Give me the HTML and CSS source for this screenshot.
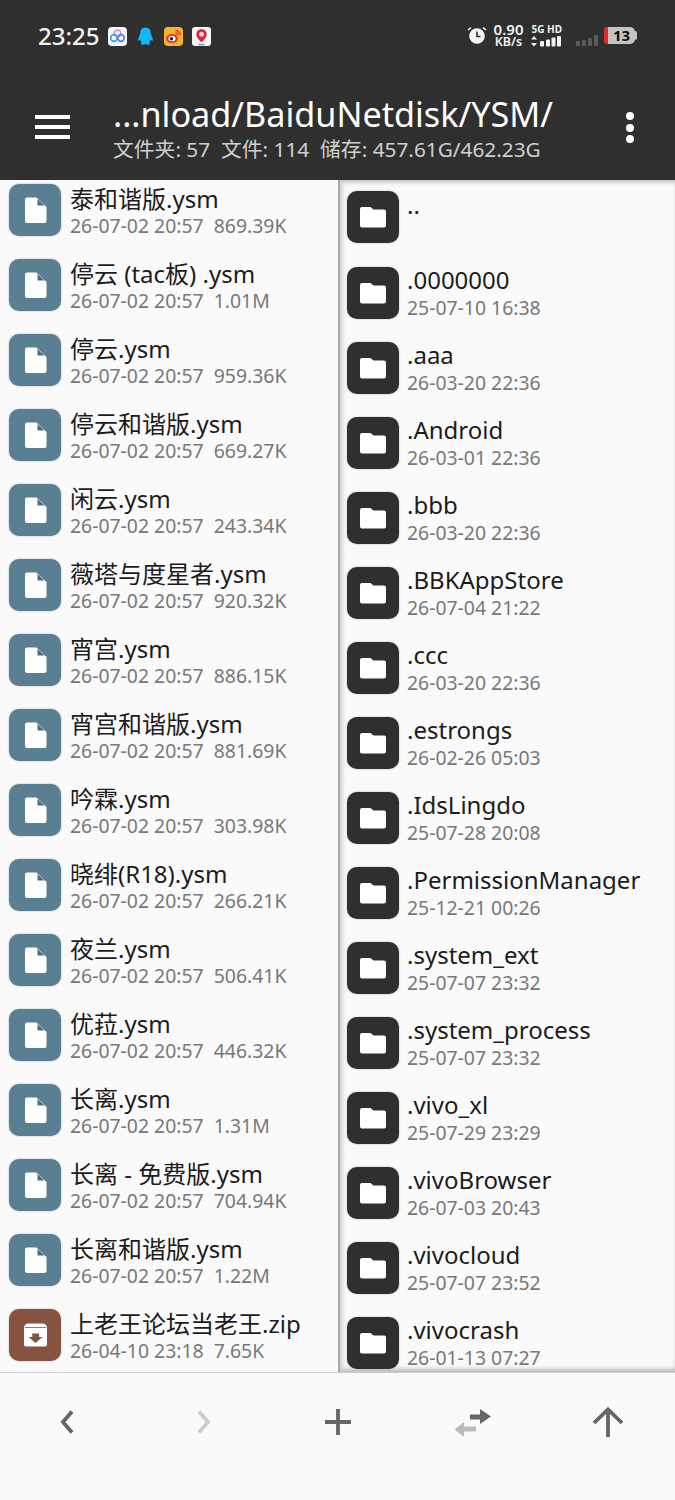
FILE: index.html
```html
<!DOCTYPE html>
<html lang="en">
<head>
<meta charset="UTF-8" />
<meta name="viewport" content="width=device-width, initial-scale=1" />
<title>File Manager</title>
<link rel="stylesheet" href="styles.css">
</head>
<body>

<svg class="defs" width="0" height="0">
  <symbol id="file" viewBox="0 0 52 52">
    <path d="M16 15.500a2 2 0 0 1 2-2h9.500l10 9.500v14a2 2 0 0 1-2 2h-17.500a2 2 0 0 1-2-2z" fill="#fff"/>
    <path d="M28.500 15v6.500h7z" fill="#4d6c7d"/>
  </symbol>
  <symbol id="folder" viewBox="0 0 52 52">
    <path d="M13 18a2 2 0 0 1 2-2h8.500l3 2.500h10.500a2 2 0 0 1 2 2v14a2 2 0 0 1-2 2h-22a2 2 0 0 1-2-2z" fill="#fff"/>
  </symbol>
  <symbol id="zip" viewBox="0 0 52 52">
    <path d="M15 19a4.500 4.500 0 0 1 4.500-4.500h14a4.500 4.500 0 0 1 4.500 4.500v16.500a2 2 0 0 1-2 2h-19a2 2 0 0 1-2-2z" fill="#fff"/>
    <path d="M16 18.500h21" stroke="#85533f" stroke-width=".8"/>
    <path d="M23 24.500h7v3.500h3.500l-7 6-7-6h4z" fill="#85533f"/>
  </symbol>
</svg>

<header class="topbar">
  <div class="status">
    <span class="clock">23:25</span>
    <div class="notif">
      <svg width="19" height="19" viewBox="0 0 19 19"><rect width="19" height="19" rx="4" fill="#f4f6fa"/><circle cx="9.500" cy="6.500" r="3.300" fill="none" stroke="#e58cc4" stroke-width="1.700"/><circle cx="6" cy="11" r="3.300" fill="none" stroke="#3aa6e0" stroke-width="1.700"/><circle cx="13" cy="11" r="3.300" fill="none" stroke="#5a7fe0" stroke-width="1.700"/></svg>
      <svg width="19" height="19" viewBox="0 0 19 19"><path d="M9.500 .5c3.800 0 5.300 2.900 5.300 5.700 0 1.800 2.400 4.600 2 7-.3 1.100-1.500.2-2-.6-.3 1.300-.8 2.200-1.500 2.800 1 .6 1.300 1.800 0 2.200-1.500.4-2.800.1-3.800-.6-1 .7-2.300 1-3.800.6-1.300-.4-1-1.600 0-2.200-.7-.6-1.200-1.500-1.500-2.800-.5.800-1.700 1.700-2 .6-.4-2.400 2-5.200 2-7C4.200 3.400 5.700.5 9.500.5z" fill="#12b7f5"/></svg>
      <svg width="19" height="19" viewBox="0 0 19 19"><rect width="19" height="19" rx="4" fill="#f5b32f"/><ellipse cx="8" cy="11.500" rx="6" ry="4.500" fill="#e6322d"/><ellipse cx="8" cy="11.500" rx="3.500" ry="2.800" fill="#fff"/><circle cx="7.500" cy="11.700" r="1.700" fill="#222"/><path d="M11.500 3.500a5 5 0 0 1 5 5M11.500 6a2.500 2.500 0 0 1 2.500 2.500" fill="none" stroke="#e6322d" stroke-width="1.300"/></svg>
      <svg width="19" height="19" viewBox="0 0 19 19"><rect width="19" height="19" rx="3" fill="#f8f8f8"/><path d="M9.500 2a5.200 5.200 0 0 1 5.200 5.200c0 3-2.700 5.300-5.200 8.300-2.500-3-5.200-5.300-5.200-8.300A5.200 5.200 0 0 1 9.500 2z" fill="#d9263a"/><circle cx="9.500" cy="7.200" r="2.500" fill="#f6c9cf"/><path d="M6.500 17.500h6" stroke="#7a8fd0" stroke-width="1.500"/></svg>
    </div>
    <div class="sys">
      <svg width="20" height="20" viewBox="0 0 20 20"><circle cx="10" cy="11" r="7.800" fill="#f4f4f4"/><path d="M10 6.500v5h3.500" fill="none" stroke="#2f2f2f" stroke-width="1.600"/><path d="M1 5l3-2.500M19 5l-3-2.500" stroke="#f4f4f4" stroke-width="1.600"/></svg>
      <div class="speed"><span class="speed-num">0.90</span><span class="speed-unit">KB/s</span></div>
      <div class="sim">
        <span class="sim-label">5G HD</span>
        <svg width="30" height="11" viewBox="0 0 30 11"><path d="M3 0l3 3.500H0zM3 10.500L0 7h6z" fill="#f4f4f4"/><rect x="9" y="5" width="4" height="5.500" rx="1" fill="#f4f4f4"/><rect x="15" y="3.500" width="4" height="7" rx="1" fill="#f4f4f4"/><rect x="20.500" y="1.500" width="4" height="9" rx="1" fill="#f4f4f4"/><rect x="26" y="0" width="4" height="10.500" rx="1" fill="#f4f4f4"/></svg>
      </div>
      <svg class="sig2" width="22" height="11" viewBox="0 0 22 11"><rect x="0" y="6" width="4" height="5" rx="1"/><rect x="6" y="5" width="4" height="6" rx="1"/><rect x="12" y="3" width="4" height="8" rx="1"/><rect x="18" y="0" width="4" height="11" rx="1"/></svg>
      <div class="battery"><i class="battery-red"></i><b>13</b><i class="battery-nub"></i></div>
    </div>
  </div>
  <div class="toolbar">
    <div class="menu"><i></i><i></i><i></i></div>
    <div class="path">
      <div class="path-name">...nload/BaiduNetdisk/YSM/</div>
      <div class="path-info">文件夹: 57&nbsp; 文件: 114&nbsp; 储存: 457.61G/462.23G</div>
    </div>
    <div class="more"><i></i><i></i><i></i></div>
  </div>
</header>

<main class="panes">
  <section class="pane pane-left">
    <div class="list">
      <div class="row"><svg class="ico ico-file"><use href="#file"/></svg><div class="txt"><div class="name">泰和谐版.ysm</div><div class="meta">26-07-02 20:57&nbsp; 869.39K</div></div></div>
      <div class="row"><svg class="ico ico-file"><use href="#file"/></svg><div class="txt"><div class="name">停云 (tac板) .ysm</div><div class="meta">26-07-02 20:57&nbsp; 1.01M</div></div></div>
      <div class="row"><svg class="ico ico-file"><use href="#file"/></svg><div class="txt"><div class="name">停云.ysm</div><div class="meta">26-07-02 20:57&nbsp; 959.36K</div></div></div>
      <div class="row"><svg class="ico ico-file"><use href="#file"/></svg><div class="txt"><div class="name">停云和谐版.ysm</div><div class="meta">26-07-02 20:57&nbsp; 669.27K</div></div></div>
      <div class="row"><svg class="ico ico-file"><use href="#file"/></svg><div class="txt"><div class="name">闲云.ysm</div><div class="meta">26-07-02 20:57&nbsp; 243.34K</div></div></div>
      <div class="row"><svg class="ico ico-file"><use href="#file"/></svg><div class="txt"><div class="name">薇塔与度星者.ysm</div><div class="meta">26-07-02 20:57&nbsp; 920.32K</div></div></div>
      <div class="row"><svg class="ico ico-file"><use href="#file"/></svg><div class="txt"><div class="name">宵宫.ysm</div><div class="meta">26-07-02 20:57&nbsp; 886.15K</div></div></div>
      <div class="row"><svg class="ico ico-file"><use href="#file"/></svg><div class="txt"><div class="name">宵宫和谐版.ysm</div><div class="meta">26-07-02 20:57&nbsp; 881.69K</div></div></div>
      <div class="row"><svg class="ico ico-file"><use href="#file"/></svg><div class="txt"><div class="name">吟霖.ysm</div><div class="meta">26-07-02 20:57&nbsp; 303.98K</div></div></div>
      <div class="row"><svg class="ico ico-file"><use href="#file"/></svg><div class="txt"><div class="name">晓绯(R18).ysm</div><div class="meta">26-07-02 20:57&nbsp; 266.21K</div></div></div>
      <div class="row"><svg class="ico ico-file"><use href="#file"/></svg><div class="txt"><div class="name">夜兰.ysm</div><div class="meta">26-07-02 20:57&nbsp; 506.41K</div></div></div>
      <div class="row"><svg class="ico ico-file"><use href="#file"/></svg><div class="txt"><div class="name">优菈.ysm</div><div class="meta">26-07-02 20:57&nbsp; 446.32K</div></div></div>
      <div class="row"><svg class="ico ico-file"><use href="#file"/></svg><div class="txt"><div class="name">长离.ysm</div><div class="meta">26-07-02 20:57&nbsp; 1.31M</div></div></div>
      <div class="row"><svg class="ico ico-file"><use href="#file"/></svg><div class="txt"><div class="name">长离 - 免费版.ysm</div><div class="meta">26-07-02 20:57&nbsp; 704.94K</div></div></div>
      <div class="row"><svg class="ico ico-file"><use href="#file"/></svg><div class="txt"><div class="name">长离和谐版.ysm</div><div class="meta">26-07-02 20:57&nbsp; 1.22M</div></div></div>
      <div class="row"><svg class="ico ico-zip"><use href="#zip"/></svg><div class="txt"><div class="name">上老王论坛当老王.zip</div><div class="meta">26-04-10 23:18&nbsp; 7.65K</div></div></div>
    </div>
  </section>
  <section class="pane pane-right">
    <div class="list">
      <div class="row row-up"><svg class="ico ico-folder"><use href="#folder"/></svg><div class="txt"><div class="name">..</div></div></div>
      <div class="row"><svg class="ico ico-folder"><use href="#folder"/></svg><div class="txt"><div class="name">.0000000</div><div class="meta">25-07-10 16:38</div></div></div>
      <div class="row"><svg class="ico ico-folder"><use href="#folder"/></svg><div class="txt"><div class="name">.aaa</div><div class="meta">26-03-20 22:36</div></div></div>
      <div class="row"><svg class="ico ico-folder"><use href="#folder"/></svg><div class="txt"><div class="name">.Android</div><div class="meta">26-03-01 22:36</div></div></div>
      <div class="row"><svg class="ico ico-folder"><use href="#folder"/></svg><div class="txt"><div class="name">.bbb</div><div class="meta">26-03-20 22:36</div></div></div>
      <div class="row"><svg class="ico ico-folder"><use href="#folder"/></svg><div class="txt"><div class="name">.BBKAppStore</div><div class="meta">26-07-04 21:22</div></div></div>
      <div class="row"><svg class="ico ico-folder"><use href="#folder"/></svg><div class="txt"><div class="name">.ccc</div><div class="meta">26-03-20 22:36</div></div></div>
      <div class="row"><svg class="ico ico-folder"><use href="#folder"/></svg><div class="txt"><div class="name">.estrongs</div><div class="meta">26-02-26 05:03</div></div></div>
      <div class="row"><svg class="ico ico-folder"><use href="#folder"/></svg><div class="txt"><div class="name">.IdsLingdo</div><div class="meta">25-07-28 20:08</div></div></div>
      <div class="row"><svg class="ico ico-folder"><use href="#folder"/></svg><div class="txt"><div class="name">.PermissionManager</div><div class="meta">25-12-21 00:26</div></div></div>
      <div class="row"><svg class="ico ico-folder"><use href="#folder"/></svg><div class="txt"><div class="name">.system_ext</div><div class="meta">25-07-07 23:32</div></div></div>
      <div class="row"><svg class="ico ico-folder"><use href="#folder"/></svg><div class="txt"><div class="name">.system_process</div><div class="meta">25-07-07 23:32</div></div></div>
      <div class="row"><svg class="ico ico-folder"><use href="#folder"/></svg><div class="txt"><div class="name">.vivo_xl</div><div class="meta">25-07-29 23:29</div></div></div>
      <div class="row"><svg class="ico ico-folder"><use href="#folder"/></svg><div class="txt"><div class="name">.vivoBrowser</div><div class="meta">26-07-03 20:43</div></div></div>
      <div class="row"><svg class="ico ico-folder"><use href="#folder"/></svg><div class="txt"><div class="name">.vivocloud</div><div class="meta">25-07-07 23:52</div></div></div>
      <div class="row"><svg class="ico ico-folder"><use href="#folder"/></svg><div class="txt"><div class="name">.vivocrash</div><div class="meta">26-01-13 07:27</div></div></div>
    </div>
  </section>
</main>

<nav class="bottombar">
  <button><svg width="30" height="30" viewBox="0 0 30 30"><path d="M19 4.500l-9 10.500 9 10.500" fill="none" stroke="#666" stroke-width="3.800"/></svg></button>
  <button><svg width="30" height="30" viewBox="0 0 30 30"><path d="M11 4.500l9 10.500-9 10.500" fill="none" stroke="#ccc" stroke-width="3.800"/></svg></button>
  <button><svg width="30" height="30" viewBox="0 0 30 30"><path d="M15 2v26M2 15h26" fill="none" stroke="#666" stroke-width="3.800"/></svg></button>
  <button><svg width="38" height="30" viewBox="0 0 38 30"><path d="M16 10h11" stroke="#666" stroke-width="5"/><path d="M26 2l11 7.500-11 7.500z" fill="#666"/><path d="M9 22h13" stroke="#bbb" stroke-width="5"/><path d="M10 15l-9.500 7.500 9.500 7.500z" fill="#bbb"/></svg></button>
  <button><svg width="32" height="32" viewBox="0 0 32 32"><path d="M16 31V4M2 17L16 3.500 30 17" fill="none" stroke="#666" stroke-width="3.800"/></svg></button>
</nav>

</body>
</html>
```

FILE: styles.css
```css
body {
  margin: 0;
  width: 675px;
  height: 1500px;
  overflow: hidden;
  background: #fafafa;
  font-family: "Noto Sans", "Noto Sans CJK SC", sans-serif;
  display: flex;
  flex-direction: column;
}
.defs {
  display: none;
}

.topbar {
  height: 180px;
  background: #2f2f2f;
  color: #fff;
  flex: none;
  display: flex;
  flex-direction: column;
}
.status {
  height: 70px;
  display: flex;
  align-items: center;
  padding: 0 38px;
  box-sizing: border-box;
}
.clock {
  font-size: 24px;
  font-weight: 500;
  color: #f2f2f2;
}
.notif {
  display: flex;
  gap: 9px;
  margin: 3px 0 0 9px;
}
.sys {
  margin-left: auto;
  display: flex;
  align-items: center;
}
.speed {
  display: flex;
  flex-direction: column;
  align-items: center;
  margin-left: 7px;
  font-weight: 600;
  color: #f2f2f2;
}
.speed-num {
  font-size: 15px;
  line-height: 13px;
}
.speed-unit {
  font-size: 12.500px;
  line-height: 12px;
}
.sim {
  display: flex;
  flex-direction: column;
  gap: 1px;
  margin-left: 8px;
}
.sim-label {
  font-size: 10px;
  line-height: 12px;
  font-weight: 700;
  color: #f2f2f2;
  white-space: nowrap;
}
.sig2 {
  fill: #5b5b5b;
  margin: 10px 0 0 14px;
}
.battery {
  width: 31px;
  height: 17px;
  margin: 0 2px 0 6px;
  border-radius: 5px;
  background: #c4c4c4;
  position: relative;
  color: #111;
  font-size: 15px;
  line-height: 17px;
  text-align: center;
  padding-left: 4px;
  box-sizing: border-box;
}
.battery b {
  font-weight: 700;
}
.battery-red {
  position: absolute;
  left: 0;
  top: 0;
  width: 4px;
  height: 17px;
  border-radius: 3px 0 0 3px;
  background: #e02b2b;
}
.battery-nub {
  position: absolute;
  right: -2px;
  top: 4px;
  width: 2px;
  height: 9px;
  border-radius: 0 2px 2px 0;
  background: #c4c4c4;
}

.toolbar {
  flex: 1;
  display: flex;
  align-items: flex-start;
}
.menu {
  width: 35px;
  margin: 45px 0 0 35px;
  display: flex;
  flex-direction: column;
  gap: 6px;
}
.menu i {
  display: block;
  height: 4px;
  background: #fff;
}
.path {
  margin: 20px 0 0 43px;
  flex: 1;
  min-width: 0;
}
.path-name {
  font-size: 34.200px;
  line-height: 47px;
  white-space: nowrap;
}
.path-info {
  font-size: 20.800px;
  line-height: 25px;
  color: #cfcfcf;
  white-space: nowrap;
}
.more {
  margin: 42px 41px 0 0;
  display: flex;
  flex-direction: column;
  gap: 3.500px;
}
.more i {
  display: block;
  width: 8px;
  height: 8px;
  border-radius: 50%;
  background: #fff;
}

.panes {
  height: 1192px;
  flex: none;
  display: flex;
  overflow: hidden;
}
.pane {
  overflow: hidden;
}
.pane-left {
  width: 338px;
  flex: none;
}
.pane-left .list {
  margin-top: -8px;
}
.pane-left .name {
  margin: 1px 0 -1px;
}
.pane-right {
  flex: 1;
  border-left: 2px solid #aaa;
  box-shadow: inset 5px 0 5px -3px #ccc, inset 0 4px 4px -2px #bbb, inset 0 -5px 4px -2px #bbb;
}
.pane-right .list {
  margin-left: -2px;
  margin-right: 2px;
}

.row {
  height: 75px;
  display: flex;
  align-items: center;
}
.ico {
  width: 52px;
  height: 52px;
  border-radius: 10px;
  flex: none;
  margin: 0 9px;
  box-shadow: 0 0 2px rgba(0, 0, 0, .3);
}
.ico-file {
  background: #5b7f92;
}
.ico-folder {
  background: #2f2f2f;
}
.ico-zip {
  background: #85533f;
}
.pane-right .ico {
  margin: 0 8px 0 9px;
}
.pane-right .txt {
  margin-bottom: 2px;
}
.txt {
  min-width: 0;
}
.name {
  font-size: 24px;
  line-height: 32px;
  color: #1c1c1c;
  white-space: nowrap;
}
.meta {
  font-size: 19.400px;
  line-height: 24px;
  color: #787878;
  white-space: nowrap;
}
.row-up {
  align-items: flex-start;
}
.row-up .ico {
  margin-top: 11px;
}
.row-up .txt {
  margin-top: 9px;
}

.bottombar {
  flex: 1;
  border-top: 1px solid #cdcdcd;
  background: #fafafa;
  display: grid;
  grid-template-columns: repeat(5, 1fr);
  grid-template-rows: 97px;
}
.bottombar button {
  background: none;
  border: none;
  padding: 0;
  display: flex;
  align-items: center;
  justify-content: center;
}
```
